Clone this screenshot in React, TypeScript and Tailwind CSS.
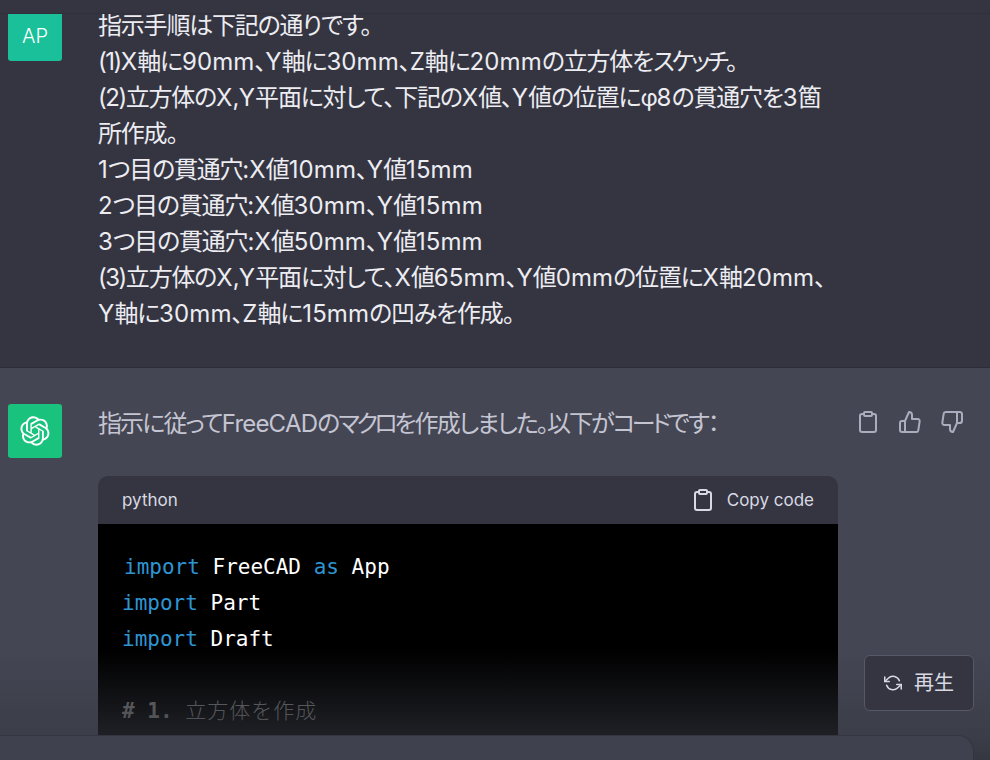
const openAiLogo =
  'M37.5324 16.8707C37.9808 15.5241 38.1363 14.0974 37.9886 12.6859C37.8409 11.2744 37.3934 9.91076 36.676 8.68622C35.6126 6.83404 33.9882 5.3676 32.0373 4.4985C30.0864 3.62941 27.9098 3.40259 25.8215 3.85078C24.8796 2.7893 23.7219 1.94125 22.4257 1.36341C21.1295 0.785575 19.7249 0.491269 18.3058 0.500197C16.1708 0.495044 14.0893 1.16803 12.3614 2.42214C10.6335 3.67624 9.34853 5.44666 8.6917 7.47815C7.30085 7.76286 5.98686 8.3414 4.8377 9.17505C3.68854 10.0087 2.73073 11.0782 2.02839 12.312C0.956464 14.1591 0.498905 16.2988 0.721698 18.4228C0.944492 20.5467 1.83612 22.5449 3.268 24.1293C2.81966 25.4759 2.66413 26.9026 2.81182 28.3141C2.95951 29.7256 3.40701 31.0892 4.12437 32.3138C5.18791 34.1659 6.8123 35.6322 8.76321 36.5013C10.7141 37.3704 12.8907 37.5973 14.9789 37.1492C15.9208 38.2107 17.0786 39.0587 18.3747 39.6366C19.6709 40.2144 21.0755 40.5087 22.4946 40.4998C24.6307 40.5054 26.7133 39.8321 28.4418 38.5772C30.1704 37.3223 31.4556 35.5506 32.1119 33.5179C33.5027 33.2332 34.8167 32.6547 35.9659 31.821C37.115 30.9874 38.0728 29.9178 38.7752 28.684C39.8458 26.8371 40.3023 24.6979 40.0789 22.5748C39.8556 20.4517 38.9639 18.4544 37.5324 16.8707ZM22.4978 37.8849C20.7443 37.8874 19.0459 37.2733 17.6994 36.1501C17.7601 36.117 17.8666 36.0586 17.936 36.0161L25.9004 31.4156C26.1003 31.3019 26.2663 31.137 26.3813 30.9378C26.4964 30.7386 26.5563 30.5124 26.5549 30.2825V19.0542L29.9213 20.998C29.9389 21.0068 29.9541 21.0198 29.9656 21.0359C29.977 21.052 29.9842 21.0707 29.9867 21.0902V30.3889C29.9842 32.375 29.1946 34.2791 27.7909 35.6841C26.3872 37.0892 24.4838 37.8806 22.4978 37.8849ZM6.39227 31.0064C5.51397 29.4888 5.19742 27.7107 5.49804 25.9832C5.55718 26.0187 5.66048 26.0818 5.73461 26.1244L13.699 30.7248C13.8975 30.8408 14.1233 30.902 14.3532 30.902C14.583 30.902 14.8088 30.8408 15.0073 30.7248L24.731 25.1103V28.9979C24.7321 29.0177 24.7283 29.0376 24.7199 29.0556C24.7115 29.0736 24.6988 29.0893 24.6829 29.1012L16.6317 33.7497C14.9096 34.7416 12.8643 35.0097 10.9447 34.4954C9.02506 33.9811 7.38785 32.7263 6.39227 31.0064ZM4.29707 13.6194C5.17156 12.0998 6.55279 10.9364 8.19885 10.3327C8.19885 10.4013 8.19491 10.5228 8.19491 10.6071V19.808C8.19351 20.0378 8.25334 20.2638 8.36823 20.4629C8.48312 20.6619 8.64893 20.8267 8.84863 20.9404L18.5723 26.5542L15.206 28.4979C15.1894 28.5089 15.1703 28.5155 15.1505 28.5173C15.1307 28.5191 15.1107 28.516 15.0924 28.5082L7.04046 23.8557C5.32135 22.8601 4.06716 21.2235 3.55289 19.3046C3.03862 17.3858 3.30624 15.3413 4.29707 13.6194ZM31.955 20.0556L22.2312 14.4411L25.5976 12.4981C25.6142 12.4872 25.6333 12.4805 25.6531 12.4787C25.6729 12.4769 25.6928 12.4801 25.7111 12.4879L33.7631 17.1364C34.9967 17.849 36.0017 18.8982 36.6606 20.1613C37.3194 21.4244 37.6047 22.849 37.4832 24.2684C37.3617 25.6878 36.8382 27.0432 35.9743 28.1759C35.1103 29.3086 33.9415 30.1717 32.6047 30.6641C32.6047 30.5947 32.6047 30.4733 32.6047 30.3889V21.188C32.6066 20.9586 32.5474 20.7328 32.4332 20.5338C32.319 20.3348 32.154 20.1698 31.955 20.0556ZM35.3055 15.0128C35.2464 14.9765 35.1431 14.9142 35.069 14.8717L27.1045 10.2712C26.906 10.1554 26.6803 10.0943 26.4504 10.0943C26.2206 10.0943 25.9948 10.1554 25.7963 10.2712L16.0726 15.8858V11.9982C16.0715 11.9783 16.0753 11.9585 16.0837 11.9405C16.0921 11.9225 16.1048 11.9068 16.1207 11.8949L24.1719 7.25025C25.4053 6.53903 26.8158 6.19376 28.2383 6.25482C29.6608 6.31589 31.0364 6.78077 32.2044 7.59508C33.3723 8.40939 34.2842 9.53945 34.8334 10.8531C35.3826 12.1667 35.5464 13.6095 35.3055 15.0128ZM14.2424 21.9419L10.8752 19.9981C10.8576 19.9893 10.8423 19.9763 10.8309 19.9602C10.8195 19.9441 10.8122 19.9254 10.8098 19.9058V10.6071C10.8107 9.18295 11.2173 7.78848 11.9819 6.58696C12.7466 5.38544 13.8377 4.42659 15.1275 3.82264C16.4173 3.21869 17.8524 2.99464 19.2649 3.1767C20.6775 3.35876 22.0089 3.93941 23.1034 4.85067C23.0427 4.88379 22.937 4.94215 22.8668 4.98473L14.9024 9.58517C14.7025 9.69878 14.5366 9.86356 14.4215 10.0626C14.3065 10.2616 14.2466 10.4877 14.2479 10.7175L14.2424 21.9419ZM16.071 17.9991L20.4018 15.4978L24.7325 17.9975V22.9985L20.4018 25.4983L16.071 22.9985V17.9991Z'

const lines = [
  '指示手順は下記の通りです。',
  '(1)X軸に90mm、Y軸に30mm、Z軸に20mmの立方体をスケッチ。',
  '(2)立方体のX,Y平面に対して、下記のX値、Y値の位置にφ8の貫通穴を3箇',
  '所作成。',
  '1つ目の貫通穴:X値10mm、Y値15mm',
  '2つ目の貫通穴:X値30mm、Y値15mm',
  '3つ目の貫通穴:X値50mm、Y値15mm',
  '(3)立方体のX,Y平面に対して、X値65mm、Y値0mmの位置にX軸20mm、',
  'Y軸に30mm、Z軸に15mmの凹みを作成。',
]

// list markers, latin, katakana and kanji/hiragana runs need different tracking to match the original font
const Mixed = ({ text, dense = false }: { text: string; dense?: boolean }) => (
  <>
    {text.match(/\(\d\)|[\x00-\x7f]+|[\u30a0-\u30ff]+|[^\x00-\x7f\u30a0-\u30ff]+/g)?.map((run, i) => {
      if (/^\(\d\)$/.test(run)) return <span key={i} className="tracking-[-1.5px]">{run}</span>
      if (/^[\x00-\x7f]/.test(run)) {
        return <span key={i} className={dense ? 'tracking-[-0.8px]' : 'tracking-[0.1px]'}>{run}</span>
      }
      if (/^[\u30a0-\u30ff]/.test(run)) {
        return <span key={i} className={dense ? 'tracking-[-3.5px]' : 'tracking-[-3px]'}>{run}</span>
      }
      return <span key={i} className={dense ? 'tracking-[-1.9px]' : 'tracking-[-1.2px]'}>{run}</span>
    })}
  </>
)

const Clipboard = ({ className }: { className: string }) => (
  <svg className={className} viewBox="0 0 24 24" fill="none" stroke="currentColor" strokeWidth={2} strokeLinecap="round" strokeLinejoin="round">
    <path d="M16 4h2a2 2 0 0 1 2 2v14a2 2 0 0 1-2 2H6a2 2 0 0 1-2-2V6a2 2 0 0 1 2-2h2" />
    <rect x="8" y="2" width="8" height="4" rx="1" ry="1" />
  </svg>
)

const App = () => {
  return (
    <div
      className="relative h-[760px] w-[990px] overflow-hidden bg-[#343541]"
      style={{ fontFamily: 'Inter, "Noto Sans CJK JP", sans-serif' }}
    >
      {/* top bar */}
      <div className="relative z-10 h-[14px] border-b border-[#2f3039] bg-[#343541]" />

      {/* user message */}
      <section className="-mt-[6px] flex h-[360px] border-b border-[#2c2d36] bg-[#343541] pl-2">
        <div className="-mt-[2px] flex h-[55px] w-[54px] shrink-0 items-center justify-center rounded-[3px] bg-[#19c09a] pt-[4px] text-[20px] font-light text-white">
          AP
        </div>
        <div className="ml-[36px] w-[750px] text-[24px] leading-[36px] text-[#ececf1] [font-feature-settings:'palt']">
          {lines.map((line) => (
            <p key={line} className="whitespace-nowrap">
              <Mixed text={line} />
            </p>
          ))}
        </div>
      </section>

      {/* assistant message */}
      <section className="flex h-[399px] bg-[#444654] pl-2 pt-[36px]">
        <div className="flex h-[54px] w-[54px] shrink-0 items-center justify-center rounded-[3px] bg-[#19c37d] text-white">
          <svg className="h-[30px] w-[30px]" viewBox="0 0 41 41" fill="currentColor">
            <path d={openAiLogo} />
          </svg>
        </div>
        <div className="ml-[36px] w-[740px]">
          <p className="whitespace-nowrap pt-[2px] text-[24px] leading-[36px] text-[#c5c5d2] [font-feature-settings:'palt']">
            <Mixed dense text="指示に従ってFreeCADのマクロを作成しました。以下がコードです：" />
          </p>
          <div className="mt-[34px] overflow-hidden rounded-t-[10px]">
            <div className="flex h-[48px] items-center justify-between bg-[#343541] px-6 pt-[2px] text-[17px] text-[#d9d9e3]">
              <span>python</span>
              <span className="flex items-center gap-[12px]">
                <Clipboard className="-mt-[2px] h-6 w-6" />
                Copy code
              </span>
            </div>
            <pre
              className="h-[300px] bg-black px-6 pt-[25px] text-[21px] leading-[36px] text-white"
              style={{ fontFamily: '"DejaVu Sans Mono", "Noto Sans CJK JP", monospace' }}
            >
              <div className="pl-[2px]">
                <span className="text-[#2e95d3]">import</span> FreeCAD <span className="text-[#2e95d3]">as</span> App
              </div>
              <div>
                <span className="text-[#2e95d3]">import</span> Part
              </div>
              <div>
                <span className="text-[#2e95d3]">import</span> Draft
              </div>
              <div>&nbsp;</div>
              <div className="font-bold text-[#6b6b6b]">
                # 1. <span className="font-light tracking-[1px]">立方体を作成</span>
              </div>
            </pre>
          </div>
        </div>
        <div className="ml-[18px] flex h-6 items-start gap-[18px] pt-[6px] text-[#acacbe]">
          <Clipboard className="h-6 w-6" />
          <svg className="h-6 w-6" viewBox="0 0 24 24" fill="none" stroke="currentColor" strokeWidth={2} strokeLinecap="round" strokeLinejoin="round">
            <path d="M14 9V5a3 3 0 0 0-3-3l-4 9v11h11.28a2 2 0 0 0 2-1.7l1.38-9a2 2 0 0 0-2-2.3zM7 22H4a2 2 0 0 1-2-2v-7a2 2 0 0 1 2-2h3" />
          </svg>
          <svg className="h-6 w-6" viewBox="0 0 24 24" fill="none" stroke="currentColor" strokeWidth={2} strokeLinecap="round" strokeLinejoin="round">
            <path d="M10 15v4a3 3 0 0 0 3 3l4-9V2H5.72a2 2 0 0 0-2 1.7l-1.38 9a2 2 0 0 0 2 2.3zm7-13h2.67A2.31 2.31 0 0 1 22 4v7a2.31 2.31 0 0 1-2.33 2H17" />
          </svg>
        </div>
      </section>

      {/* bottom fade, regenerate button, input */}
      <div className="absolute inset-x-0 bottom-0 h-[110px] bg-[linear-gradient(to_bottom,rgba(53,55,64,0)_0%,rgba(53,55,64,0.58)_77%,rgba(53,55,64,1)_100%)]" />
      <button className="absolute left-[864px] top-[655px] flex h-[56px] w-[110px] items-center justify-center gap-[12px] rounded-[6px] border border-[#565869] bg-[#343541] text-[20px] text-[#d9d9e3]">
        <svg className="h-[18px] w-[18px]" viewBox="0 0 24 24" fill="none" stroke="currentColor" strokeWidth={2} strokeLinecap="round" strokeLinejoin="round">
          <polyline points="1 4 1 10 7 10" />
          <polyline points="23 20 23 14 17 14" />
          <path d="M20.49 9A9 9 0 0 0 5.64 5.64L1 10m22 4l-4.64 4.36A9 9 0 0 1 3.51 15" />
        </svg>
        再生
      </button>
      <div className="absolute bottom-0 left-0 h-[25px] w-[974px] rounded-tr-[16px] border-r border-t border-[#343541] bg-[#40414f]" />
    </div>
  )
}

export default App
